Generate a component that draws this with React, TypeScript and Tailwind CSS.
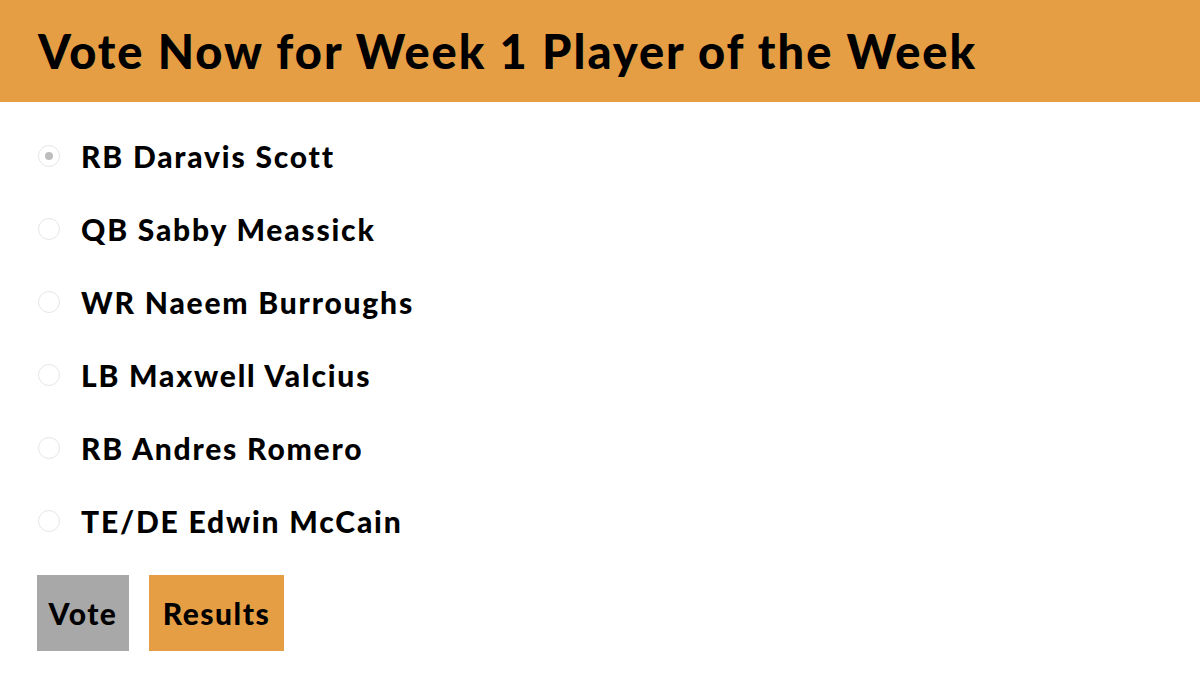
import { useState } from 'react';

const players = [
  'RB Daravis Scott',
  'QB Sabby Meassick',
  'WR Naeem Burroughs',
  'LB Maxwell Valcius',
  'RB Andres Romero',
  'TE/DE Edwin McCain',
];

function App() {
  const [selected, setSelected] = useState(0);

  return (
    <div className="min-h-[692px] bg-white text-black font-['Lato','Liberation_Sans',sans-serif]">
      <div className="h-[102px] bg-[#e69e45] flex items-center px-[38px]">
        <h1 className="text-[47px] font-black tracking-[2px] leading-none">Vote Now for Week 1 Player of the Week</h1>
      </div>

      <div className="px-[37px] pt-[17px]">
        {players.map((name, i) => (
          <label key={name} className="h-[73px] flex items-center cursor-pointer" onClick={() => setSelected(i)}>
            <span className="w-[22px] h-[22px] ml-px rounded-full border border-[#e6e6e6] bg-white flex items-center justify-center shrink-0">
              {selected === i && <span className="w-[8px] h-[8px] rounded-full bg-[#bdbdbd]" />}
            </span>
            <span className="ml-[21px] text-[30px] font-black tracking-[1.8px] leading-none">{name}</span>
          </label>
        ))}

        <div className="flex gap-[20px] mt-[18px]">
          <button className="h-[76px] w-[92px] bg-[#a8a8a8] text-[30px] font-black tracking-[1.5px]">Vote</button>
          <button className="h-[76px] w-[135px] bg-[#e69e45] text-[30px] font-black tracking-[1.5px]">Results</button>
        </div>
      </div>
    </div>
  );
}

export default App;
